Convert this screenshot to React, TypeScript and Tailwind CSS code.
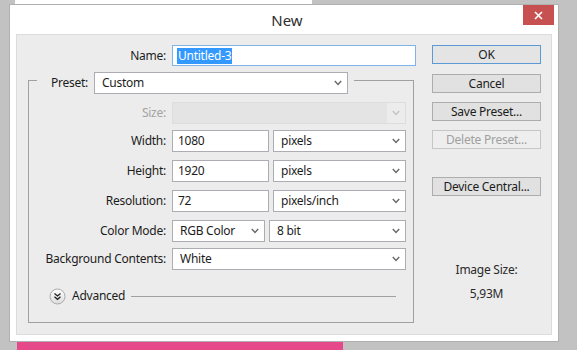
import React from "react";

const Chevron = ({ light }: { light?: boolean }) => (
  <svg width="8" height="6" viewBox="0 0 8 6" className="shrink-0">
    <polyline
      points="0.8,1 4,4.4 7.2,1"
      fill="none"
      stroke={light ? "#c4c4c4" : "#6b6b6b"}
      strokeWidth="1.5"
    />
  </svg>
);

const Select = ({ value, className }: { value: string; className: string }) => (
  <div
    className={`h-[22px] border border-[#abadb3] bg-white flex items-center justify-between pl-[7px] pr-[5px] ${className}`}
  >
    <span>{value}</span>
    <Chevron />
  </div>
);

const TextInput = ({ value }: { value: string }) => (
  <div className="h-[22px] w-[97px] border border-[#abadb3] bg-white flex items-center pl-[5px]">
    {value}
  </div>
);

const Row = ({
  label,
  className,
  children,
  disabled,
}: {
  label: string;
  className: string;
  children: React.ReactNode;
  disabled?: boolean;
}) => (
  <div className={`flex items-center h-[22px] ${className}`}>
    <span
      className={`w-[137px] text-right ${disabled ? "text-[#a3a3a3]" : ""}`}
    >
      {label}
    </span>
    <div className="ml-[6px] flex gap-[4px]">{children}</div>
  </div>
);

const Button = ({
  label,
  className,
  primary,
  disabled,
}: {
  label: string;
  className: string;
  primary?: boolean;
  disabled?: boolean;
}) => (
  <div
    className={`h-[19px] w-[109px] flex items-center justify-center border ${
      primary
        ? "border-[#5b9ad6] bg-[#e4e4e4]"
        : disabled
        ? "border-[#c6c6c6] bg-[#eeeeee] text-[#a0a0a0]"
        : "border-[#adadad] bg-[#e1e1e1]"
    } ${className}`}
  >
    {label}
  </div>
);

export default function App() {
  return (
    <div className="relative w-[577px] h-[350px] overflow-hidden bg-[#c2c2c2] font-['Noto_Sans',sans-serif] text-[12px] leading-[16px] tracking-[-0.25px] text-[#1c1c1c]">
      {/* canvas showing behind the dialog */}
      <div className="absolute left-[15px] top-0 w-[297px] h-[4px] bg-white" />
      <div className="absolute left-[17px] top-[342px] w-[326px] h-[8px] bg-[#e5498a]" />

      <div className="absolute left-[9px] top-[4px] w-[550px] h-[338px] bg-white border border-[#b0b0b0] flex flex-col">
        <div className="relative h-[29px] flex items-center justify-center">
          <span className="text-[15px] tracking-normal text-[#2e2e2e] pl-[6px]">New</span>
          <div className="absolute right-[4px] top-0 w-[31px] h-[20px] bg-[#c75050] flex items-center justify-center">
            <svg width="9" height="9" viewBox="0 0 9 9">
              <path d="M1 1L8 8M8 1L1 8" stroke="#fff" strokeWidth="1.6" />
            </svg>
          </div>
        </div>

        <div className="mx-[6px] w-[536px] h-[301px] border border-[#dcdcdc] bg-[#ececec] flex">
          {/* left column */}
          <div className="w-[399px] pt-[10px]">
            <div className="flex items-center h-[21px]">
              <span className="w-[149px] text-right">Name:</span>
              <div className="ml-[6px] w-[244px] h-[21px] border border-[#7eb4ea] bg-white flex items-center pl-[4px]">
                <span className="bg-[#3399ff] text-white px-[1px]">Untitled-3</span>
              </div>
            </div>

            <fieldset className="ml-[11px] mt-px w-[386px] border border-[#a0a0a0]">
              <legend className="ml-[8px] pt-[5px]">
                <div className="flex items-center pl-[14px] pr-[6px]">
                  <span className="w-[43px]">Preset:</span>
                  <Select value="Custom" className="w-[254px]" />
                </div>
              </legend>

              <div className="pt-[8px] pb-[18px]">
                <Row label="Size:" className="" disabled>
                  <div className="h-[22px] w-[234px] border border-[#dddddd] flex">
                    <div className="flex-1 bg-[#e4e4e4]" />
                    <div className="w-[18px] flex items-center justify-center">
                      <Chevron light />
                    </div>
                  </div>
                </Row>
                <Row label="Width:" className="mt-[6px]">
                  <TextInput value="1080" />
                  <Select value="pixels" className="w-[133px]" />
                </Row>
                <Row label="Height:" className="mt-[8px]">
                  <TextInput value="1920" />
                  <Select value="pixels" className="w-[133px]" />
                </Row>
                <Row label="Resolution:" className="mt-[8px]">
                  <TextInput value="72" />
                  <Select value="pixels/inch" className="w-[133px]" />
                </Row>
                <Row label="Color Mode:" className="mt-[8px]">
                  <Select value="RGB Color" className="w-[93px] pl-[5px]" />
                  <Select value="8 bit" className="w-[137px]" />
                </Row>
                <Row label="Background Contents:" className="mt-[6px]">
                  <Select value="White" className="w-[234px]" />
                </Row>

                <div className="mt-[18px] flex items-center h-[16px] pl-[20px] pr-[17px]">
                  <svg width="17" height="17" viewBox="0 0 17 17" className="shrink-0">
                    <defs>
                      <linearGradient id="adv" x1="0" y1="0" x2="0" y2="1">
                        <stop offset="0" stopColor="#ffffff" />
                        <stop offset="1" stopColor="#dcdcdc" />
                      </linearGradient>
                    </defs>
                    <circle cx="8.5" cy="8.5" r="7.5" fill="url(#adv)" stroke="#a8a8a8" />
                    <polyline points="5.5,5.5 8.5,8 11.5,5.5" fill="none" stroke="#222" strokeWidth="1.3" />
                    <polyline points="5.5,8.8 8.5,11.3 11.5,8.8" fill="none" stroke="#222" strokeWidth="1.3" />
                  </svg>
                  <span className="ml-[6px]">Advanced</span>
                  <div className="ml-[6px] flex-1 h-px bg-[#a0a0a0]" />
                </div>
              </div>
            </fieldset>
          </div>

          {/* right column */}
          <div className="ml-[16px] pt-[10px] flex flex-col items-center">
            <Button label="OK" className="" primary />
            <Button label="Cancel" className="mt-[10px]" />
            <Button label="Save Preset..." className="mt-[9px]" />
            <Button label="Delete Preset..." className="mt-[9px]" disabled />
            <Button label="Device Central..." className="mt-[28px]" />
            <span className="mt-[66px] text-[#2a2a2a]">Image Size:</span>
            <span className="mt-[8px] text-[#2a2a2a]">5,93M</span>
          </div>
        </div>
      </div>
    </div>
  );
}
